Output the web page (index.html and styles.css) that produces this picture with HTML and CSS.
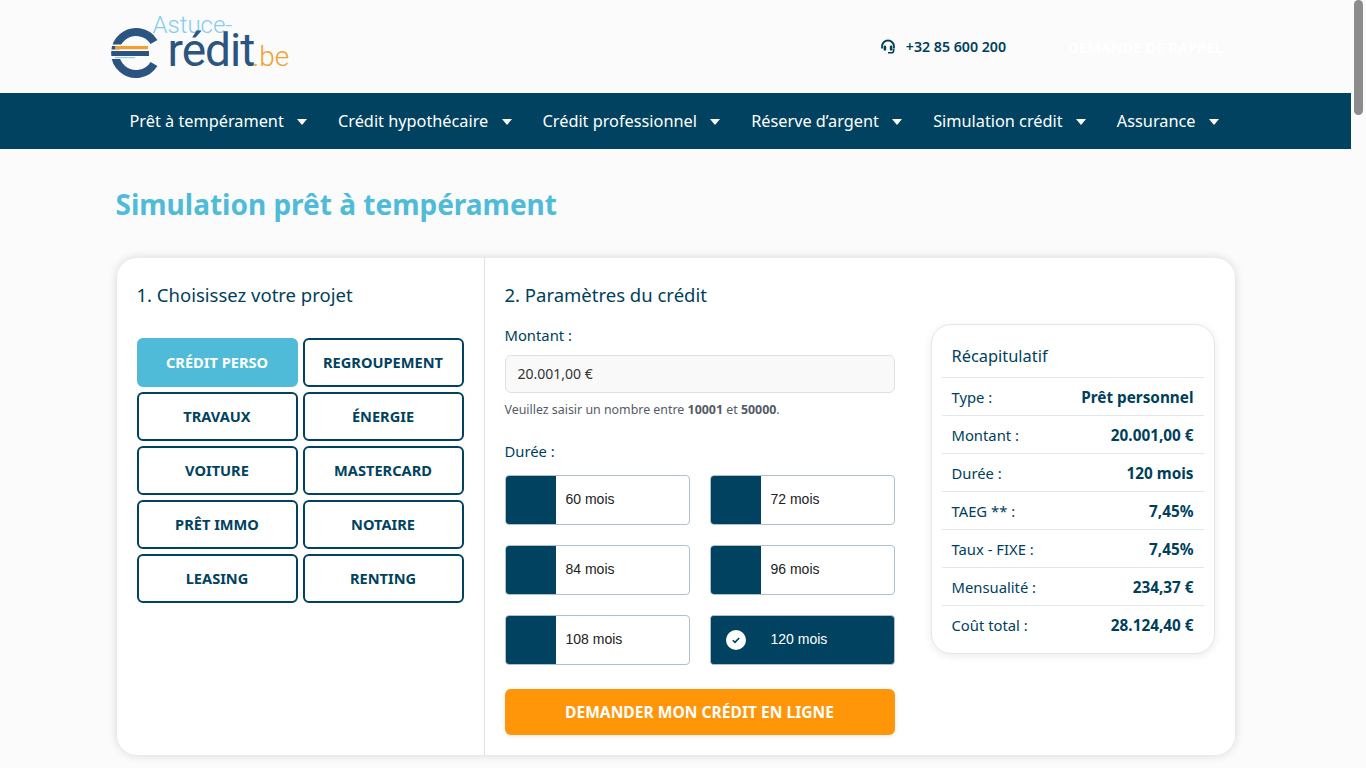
FILE: index.html
```html
<!DOCTYPE html>
<html lang="fr">

<head>
    <meta charset="UTF-8">
    <meta name="viewport" content="width=device-width, initial-scale=1.0">
    <title>Simulation prêt à tempérament</title>
    <link rel="stylesheet" href="styles.css">
</head>

<body>

    <header class="top">
        <div class="wrap top-inner">
            <a class="logo" href="#">
                <svg class="logo-c" viewBox="0 0 52 52" width="52" height="52">
                    <path d="M44 15 A21 21 0 1 0 44 37" fill="none" stroke="#2b5480" stroke-width="8" />
                    <rect x="4" y="24" width="35" height="5" fill="#2b5480" />
                    <rect x="1" y="17.5" width="38" height="1.5" fill="#fbfbfb" />
                    <rect x="5" y="19" width="33" height="3.5" fill="#f5a02c" />
                    <rect x="1" y="22.5" width="37" height="1.5" fill="#fbfbfb" />
                    <rect x="1" y="29" width="27" height="3" fill="#fbfbfb" />
                    <rect x="5" y="30" width="20" height="1.2" fill="#8fd0ee" />
                </svg>
                <span class="logo-top">Astuce-</span>
                <span class="logo-main">rédit</span>
                <span class="logo-be">.be</span>
            </a>
            <div class="top-right">
                <span class="phone">
                    <svg viewBox="0 0 16 16" width="16" height="16">
                        <path d="M2 9.5V7.5a6 6 0 0 1 12 0v2" fill="none" stroke="#003f5c" stroke-width="1.8" />
                        <rect x="3.6" y="6.6" width="2.6" height="5" rx="1.2" fill="#003f5c" />
                        <rect x="9.8" y="6.6" width="2.6" height="5" rx="1.2" fill="#003f5c" />
                        <path d="M13.6 10v1.8a2 2 0 0 1-2 2H8" fill="none" stroke="#003f5c" stroke-width="1.6" />
                    </svg>
                    +32 85 600 200
                </span>
                <a class="callback" href="#">DEMANDE DE RAPPEL</a>
            </div>
        </div>
    </header>

    <nav class="nav">
        <ul class="wrap nav-list">
            <li>Prêt à tempérament <span class="caret"></span></li>
            <li>Crédit hypothécaire <span class="caret"></span></li>
            <li>Crédit professionnel <span class="caret"></span></li>
            <li>Réserve d’argent <span class="caret"></span></li>
            <li>Simulation crédit <span class="caret"></span></li>
            <li>Assurance <span class="caret"></span></li>
        </ul>
    </nav>

    <main class="wrap">
        <h1>Simulation prêt à tempérament</h1>

        <section class="card">
            <div class="col-project">
                <h2>1. Choisissez votre projet</h2>
                <div class="projects">
                    <button class="project active">CRÉDIT PERSO</button>
                    <button class="project">REGROUPEMENT</button>
                    <button class="project">TRAVAUX</button>
                    <button class="project">ÉNERGIE</button>
                    <button class="project">VOITURE</button>
                    <button class="project">MASTERCARD</button>
                    <button class="project">PRÊT IMMO</button>
                    <button class="project">NOTAIRE</button>
                    <button class="project">LEASING</button>
                    <button class="project">RENTING</button>
                </div>
            </div>

            <div class="col-params">
                <h2>2. Paramètres du crédit</h2>
                <div class="params-body">
                    <div class="form">
                        <label class="label" for="amount">Montant :</label>
                        <input class="amount" id="amount" type="text" value="20.001,00 €">
                        <p class="help">Veuillez saisir un nombre entre <b>10001</b> et <b>50000</b>.</p>

                        <div class="label label-duree">Durée :</div>
                        <div class="durations">
                            <div class="duration"><span class="tick"></span><span class="months">60 mois</span></div>
                            <div class="duration"><span class="tick"></span><span class="months">72 mois</span></div>
                            <div class="duration"><span class="tick"></span><span class="months">84 mois</span></div>
                            <div class="duration"><span class="tick"></span><span class="months">96 mois</span></div>
                            <div class="duration"><span class="tick"></span><span class="months">108 mois</span></div>
                            <div class="duration selected">
                                <span class="tick">
                                    <svg viewBox="0 0 20 20" width="20" height="20">
                                        <circle cx="10" cy="10" r="10" fill="#ffffff" />
                                        <path d="M6.8 10.2l2.2 2.2 4.2-4.4" fill="none" stroke="#003f5c" stroke-width="1.6" />
                                    </svg>
                                </span>
                                <span class="months">120 mois</span>
                            </div>
                        </div>

                        <button class="cta">DEMANDER MON CRÉDIT EN LIGNE</button>
                    </div>

                    <aside class="summary">
                        <h3>Récapitulatif</h3>
                        <div class="row"><span>Type :</span><b>Prêt personnel</b></div>
                        <div class="row"><span>Montant :</span><b>20.001,00 €</b></div>
                        <div class="row"><span>Durée :</span><b>120 mois</b></div>
                        <div class="row"><span>TAEG ** :</span><b>7,45%</b></div>
                        <div class="row"><span>Taux - FIXE :</span><b>7,45%</b></div>
                        <div class="row"><span>Mensualité :</span><b>234,37 €</b></div>
                        <div class="row"><span>Coût total :</span><b>28.124,40 €</b></div>
                    </aside>
                </div>
            </div>
        </section>
    </main>

    <div class="scrollbar"><div class="thumb"></div></div>

</body>

</html>
```

FILE: styles.css
```css
body {
    font-family: 'Noto Sans', sans-serif;
    background-color: #fbfbfb;
    color: #003f5c;
    margin: 0;
    padding-right: 15px;
}

.scrollbar {
    position: fixed;
    top: 0;
    right: 0;
    bottom: 0;
    width: 15px;
    background-color: #fbfbfb;
}

.thumb {
    width: 9px;
    height: 115px;
    margin-left: 3px;
    background-color: #8c8c8c;
    border-radius: 5px;
}

.wrap {
    width: 1120px;
    margin: 0 auto;
}

.top {
    height: 93px;
}

.top-inner {
    display: flex;
    justify-content: space-between;
    align-items: center;
    height: 93px;
}

.logo {
    position: relative;
    display: block;
    width: 190px;
    height: 93px;
    margin-left: -6px;
    text-decoration: none;
    font-family: 'Roboto', sans-serif;
    font-weight: 300;
}

.logo-c {
    position: absolute;
    left: 0;
    top: 27px;
}

.logo-top {
    position: absolute;
    left: 43px;
    top: 17px;
    font-size: 24px;
    line-height: 0.7;
    color: #84cdf0;
}

.logo-main {
    position: absolute;
    left: 58px;
    top: 34px;
    font-size: 46px;
    line-height: 0.7;
    letter-spacing: -1px;
    font-weight: 400;
    color: #2b5480;
}

.logo-be {
    position: absolute;
    left: 143px;
    top: 40px;
    font-size: 28px;
    color: #f5a02c;
}

.top-right {
    display: flex;
    align-items: center;
    margin-right: 13px;
}

.phone {
    display: flex;
    align-items: center;
    gap: 10px;
    font-size: 14.2px;
    font-weight: 600;
}

.callback {
    margin-left: 62px;
    font-size: 14.8px;
    font-weight: 600;
    color: #fff;
    text-decoration: none;
}

.nav {
    background-color: #004260;
    height: 56px;
}

.nav-list {
    display: flex;
    align-items: center;
    gap: 31px;
    height: 56px;
    list-style: none;
    padding: 0 0 0 14px;
    box-sizing: border-box;
    color: #fff;
    font-size: 16.3px;
}

.caret {
    display: inline-block;
    width: 0;
    height: 0;
    margin-left: 9px;
    vertical-align: 2px;
    border-left: 5.5px solid transparent;
    border-right: 5.5px solid transparent;
    border-top: 6px solid #fff;
}

h1 {
    color: #4fbbd9;
    font-size: 28px;
    font-weight: 700;
    line-height: 40px;
    margin: 35px 0 34px;
}

.card {
    display: flex;
    width: 1118px;
    height: 497px;
    margin: 0 0 13px 1px;
    background-color: #fff;
    border-radius: 20px;
    box-shadow: 0 0 10px rgba(0, 0, 0, 0.15);
}

h2 {
    font-size: 18.5px;
    font-weight: 400;
    line-height: 24px;
    margin: 0;
}

.col-project {
    width: 368px;
    padding: 25px 20px 0;
    box-sizing: border-box;
    border-right: 1px solid #dee2e6;
}

.projects {
    display: grid;
    grid-template-columns: 161px 161px;
    grid-auto-rows: 49px;
    gap: 5px;
    margin-top: 31px;
}

.project {
    font-family: 'Noto Sans', sans-serif;
    font-size: 14.6px;
    font-weight: 700;
    color: #004260;
    background-color: #fff;
    border: 2px solid #004260;
    border-radius: 6px;
    padding: 0 0 2px;
}

.project.active {
    background-color: #4fbbd9;
    border-color: #4fbbd9;
    color: #fff;
}

.col-params {
    padding: 25px 20px 0;
    flex: 1;
}

.params-body {
    display: flex;
    justify-content: space-between;
}

.form {
    width: 390px;
}

.label {
    display: block;
    font-size: 14.8px;
    line-height: 20px;
    margin-top: 18px;
}

.amount {
    display: block;
    width: 100%;
    height: 38px;
    margin-top: 10px;
    padding: 0 12px 2px;
    box-sizing: border-box;
    font-family: 'Noto Sans', sans-serif;
    font-size: 14px;
    color: #333;
    background-color: #f9f9f9;
    border: 1px solid #dee2e6;
    border-radius: 6px;
}

.help {
    font-size: 12.4px;
    line-height: 18px;
    color: #555b66;
    margin: 8px 0 0;
}

.label-duree {
    margin-top: 22px;
}

.durations {
    display: grid;
    grid-template-columns: 185px 185px;
    grid-auto-rows: 50px;
    gap: 20px;
    margin-top: 14px;
}

.duration {
    display: flex;
    align-items: center;
    background-color: #fff;
    border: 1px solid #aebfd0;
    border-radius: 4px;
    overflow: hidden;
}

.tick {
    display: flex;
    align-items: center;
    justify-content: center;
    width: 50px;
    height: 100%;
    background-color: #004260;
}

.months {
    margin: 0 0 2px 10px;
    font-family: 'Liberation Sans', sans-serif;
    font-size: 14px;
    color: #222;
}

.duration.selected {
    background-color: #004260;
}

.duration.selected .months {
    color: #fff;
}

.cta {
    display: block;
    width: 100%;
    height: 46px;
    margin-top: 24px;
    padding: 0;
    font-family: 'Noto Sans', sans-serif;
    font-size: 15.6px;
    font-weight: 700;
    color: #fff;
    background-color: #ff9509;
    border: none;
    border-radius: 6px;
    box-shadow: 0 1px 4px rgba(0, 0, 0, 0.1);
}

.summary {
    width: 284px;
    height: 330px;
    margin-top: 17px;
    padding: 0 10px;
    box-sizing: border-box;
    background-color: #fff;
    border: 1px solid #e6e6e6;
    border-radius: 20px;
    box-shadow: 0 2px 8px rgba(0, 0, 0, 0.08);
}

h3 {
    font-size: 16.4px;
    font-weight: 400;
    line-height: 42px;
    height: 52px;
    margin: 0;
    padding: 10px 0 0 10px;
    box-sizing: border-box;
}

.row {
    display: flex;
    justify-content: space-between;
    align-items: center;
    height: 38px;
    padding: 0 10px;
    box-sizing: border-box;
    border-top: 1px solid #e4e7eb;
    font-size: 14.8px;
}

.row b {
    font-weight: 700;
    font-size: 15.3px;
}
```
